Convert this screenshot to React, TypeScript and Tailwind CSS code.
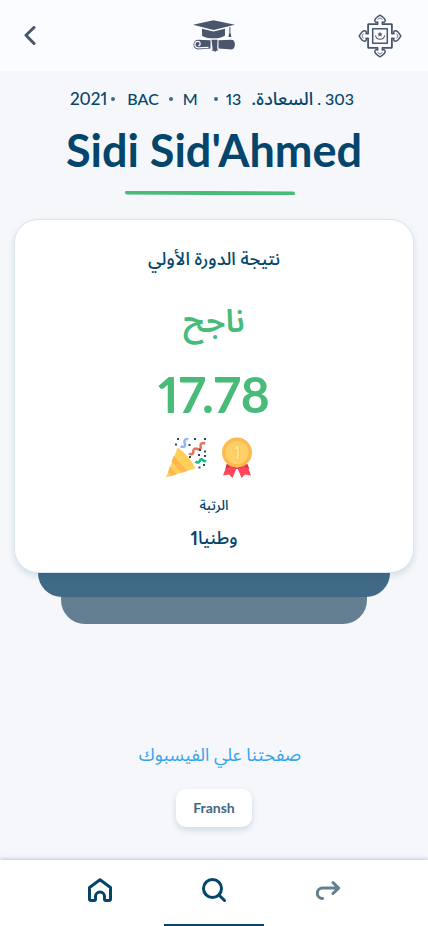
import React from "react";

const arabic = "font-['Noto_Sans_Arabic','DejaVu_Sans',sans-serif]";

function ChevronLeft() {
  return (
    <svg className="h-5 w-3" viewBox="0 0 12 20" fill="none" stroke="#4a566b" strokeWidth="3" strokeLinecap="round" strokeLinejoin="round" aria-hidden="true">
      <path d="M10 1.500 2 9.300 10 17.500" />
    </svg>
  );
}

function Graduation() {
  return (
    <svg className="h-8 w-[42px]" viewBox="0 0 42 32" aria-hidden="true">
      <g fill="#4a566b">
        <path d="M0 4.800 20.500.300 42 4.800 20.500 10Z" />
        <path d="M9 8.800 20.500 11.500 32 8.800V15.500c-2.500 2-7 2.800-11.500 2.800S11 17.500 9 15.500Z" />
        <path d="M36.400 7h1v6.500h-1zM36 13.500h1.800l.5 3.500h-2.800z" />
        <path d="M4.500 19.700 17.500 20.300v8.300l-13 .8C-.8 29-.8 20.100 4.500 19.700Z" />
        <path d="M25.500 20.300 39 19.700c3.800.4 3.800 8.900 0 9.700l-13.500-.8Z" />
        <path d="M18.500 19.800h6l-.3 8.800 1 1.900-2 .2-1 1.200-1.200-1.200-1.800.3.400-2Z" />
      </g>
      <path d="M15.500 27.300 5 27.900c-4.200-.5-4-6.500-.2-6.500 3 0 3.100 4 .5 4.300" fill="none" stroke="#fbfcff" strokeWidth="1.200" />
    </svg>
  );
}

function Emblem() {
  return (
    <svg className="h-11 w-11" viewBox="0 0 44 44" fill="none" stroke="#4a566b" strokeWidth="1.500" strokeLinejoin="round" aria-hidden="true">
      {[0, 90, 180, 270].map((angle) => (
        <g key={angle} transform={`rotate(${angle} 22 22)`}>
          <path d="M10.200 19.700V10.200h9.500V8c-1.500.8-3 0-2.900-1.600.2-2.300 2.700-3.600 5.200-5.200 2.500 1.600 5 2.900 5.200 5.200.1 1.600-1.400 2.400-2.900 1.600v2.200h9.500v9.500" />
          <path d="M19.500 5.500 22 4l2.500 1.500" strokeWidth=".8" />
        </g>
      ))}
      <rect x="14.700" y="14.700" width="14.600" height="14.600" />
      <path d="M17.500 21.500a4.700 4.700 0 0 0 9.200 0" strokeWidth="1.200" />
      <path d="m22 17.500.8 1.900h1.900l-1.400 1.300.6 2-1.900-1.200-1.900 1.200.6-2-1.400-1.300h1.900Z" fill="#4a566b" stroke="none" />
    </svg>
  );
}

function PartyPopper() {
  return (
    <svg className="h-[41px] w-[41px]" viewBox="0 0 41 41" role="img" aria-label="تهانينا">
      <path d="M11.500 11 29 31.500 0 40.500Z" fill="#ffd05c" />
      <path d="m7.800 18.500 13.500 15.400-6 1.900-9.700-11.200ZM3.800 29.500l7 7.800-5.500 1.600-3.100-3.900Z" fill="#ffb84e" />
      <path d="M11.500 11C16 12 29 27 28.700 31.500c-4 .7-18-16-17.200-20.500Z" fill="#ffcf55" />
      <path d="M14.500 9.500c3.500 1 5.500-.2 4.300-3.200C17.500 3 20 1 22 2.500" fill="none" stroke="#8db7fa" strokeWidth="2.500" />
      <path d="M23 16.500c2.500 1.500 4.500.5 4.300-2-.2-2.500 2-3.500 4.300-2.500 2.500 1 3.600-1 3-3-.5-2.300 1.800-3.700 4.600-2.500" fill="none" stroke="#e3735b" strokeWidth="2.500" />
      <path d="M29.500 24.500c2 1.700 3.800 1.200 4.300-.8.600-2.200 2.700-1.500 3.400-.3.700 1.200 1.800 1 2.300-.4" fill="none" stroke="#0dbd82" strokeWidth="2.500" />
      <path d="M11 1h2v2h-2zM9 6.500h2v2H9zM22.500 7h2v2h-2zM28 1h2v2h-2zM38 1h2v2h-2zM33 12h2v2h-2zM38 13.500h2v2h-2zM23 19h2v2h-2zM32 17h2v2h-2zM38 18h2v2h-2zM32.500 29.500h2v2h-2zM37 27h2v2h-2z" fill="#294b69" />
    </svg>
  );
}

function Medal() {
  return (
    <svg className="h-[41px] w-8" viewBox="0 0 32 41" role="img" aria-label="المركز الأول">
      <path d="M7 25 2 38.500l6-1 3.500 3.500L16 30l4.500 11 3.500-3.500 6 1L25 25Z" fill="#ff465a" />
      <path d="m5.500 27 3.500 3 7 1 7-1 3.500-3 2 5-5-2-7 2-7-2-5 2Z" fill="#d93547" />
      <circle cx="16" cy="15.500" r="15" fill="#fdbb4e" />
      <circle cx="16" cy="15.500" r="11.500" fill="#ffcf68" />
      <path d="M5.500 20a11.500 11.500 0 0 0 21 0A11.500 11.500 0 0 1 5.500 20Z" fill="#ffb950" />
      <path d="m12 11.500 4.300-3.500h2.200v15h-3.300V12.300l-2.200 1.500Z" fill="#ffe383" stroke="#fbb64c" strokeWidth=".6" />
    </svg>
  );
}

function Dot() {
  return <span className="h-1 w-1 rounded-full bg-[#3f6883]" />;
}

const tab = "flex h-full w-[100px] items-center justify-center border-b-2 pb-1";

export default function App() {
  return (
    <div className="flex min-h-screen flex-col bg-[#f5f7fb] font-['Lato',sans-serif] text-[#03456b]">
      <header className="grid h-[71px] grid-cols-[1fr_auto_1fr] items-center bg-[#fbfcff] px-6">
        <button type="button" aria-label="رجوع" className="justify-self-start">
          <ChevronLeft />
        </button>
        <Graduation />
        <div className="justify-self-end pr-[2px]">
          <Emblem />
        </div>
      </header>

      <main className="flex flex-1 flex-col">
        <div className="mt-[14px] flex h-7 items-center justify-center text-base font-medium proportional-nums">
          <div className="flex items-center gap-1">
            <span className="text-[17px]">2021</span>
            <Dot />
          </div>
          <div className="flex items-center gap-[10px] pl-3">
            <span>BAC</span>
            <Dot />
            <span>M</span>
          </div>
          <div className="flex items-center gap-2 pl-4">
            <Dot />
            <span>13</span>
          </div>
          <span dir="rtl" className={`pl-[10px] text-lg ${arabic}`}>السعادة.</span>
          <span className="pl-1 pr-1">. 303</span>
        </div>

        <h1 className="mt-1 text-center text-[45px] font-bold leading-[66px]">Sidi Sid'Ahmed</h1>
        <div className="mt-2 flex justify-center pr-2">
          <svg className="h-1 w-[170px]" viewBox="0 0 170 4" aria-hidden="true">
            <path d="M2 1.600 168 2.400" stroke="#48bb78" strokeWidth="4" strokeLinecap="round" />
          </svg>
        </div>

        <section className="mt-6 flex flex-col">
          <div className="relative z-10 mx-[14px] flex h-[354px] flex-col items-center rounded-3xl border border-[#dce6ef] bg-white pt-[25px] shadow-[0_3px_6px_rgba(3,69,107,0.14)]">
            <h2 dir="rtl" className={`text-lg font-medium leading-7 ${arabic}`}>نتيجة الدورة الأولي</h2>
            <p dir="rtl" className={`mt-6 text-[32px] font-semibold leading-[50px] text-[#48bb78] ${arabic}`}>ناجح</p>
            <p className="mt-4 text-[50px] font-bold proportional-nums leading-[62px] text-[#48bb78]">17.78</p>
            <div className="mt-3 flex gap-[14px] pr-[10px]">
              <PartyPopper />
              <Medal />
            </div>
            <p dir="rtl" className={`mt-4 text-sm font-medium leading-6 ${arabic}`}>الرتبة</p>
            <p className={`mt-2 flex text-lg font-medium leading-6 ${arabic}`}>
              <span className="font-['Lato',sans-serif] font-bold proportional-nums">1</span>
              <span dir="rtl">وطنيا</span>
            </p>
          </div>
          <div className="mx-[38px] h-6 rounded-b-3xl bg-[#406a85]" />
          <div className="mx-[61px] h-[27px] rounded-b-3xl bg-[#637f91]" />
        </section>

        <footer className="mt-auto flex flex-col items-center pb-[33px] pt-8">
          <a href="#facebook" dir="rtl" className={`pl-3 text-lg leading-7 text-[#34a4ee] ${arabic}`}>صفحتنا علي الفيسبوك</a>
          <button type="button" className="mt-5 h-[38px] w-[76px] rounded-[10px] bg-white text-sm font-bold text-[#3f6883] shadow-[0_3px_6px_rgba(3,69,107,0.16)]">Fransh</button>
        </footer>
      </main>

      <nav className="flex h-[66px] justify-center gap-[14px] bg-white shadow-[0_-1px_4px_rgba(3,69,107,0.25)]">
        <a href="#home" aria-label="الرئيسية" className={`${tab} border-transparent`}>
          <svg className="h-6 w-6" viewBox="0 0 24 24" fill="none" stroke="#03456b" strokeWidth="3" strokeLinejoin="round" aria-hidden="true">
            <path d="M1.500 9.500 12 1.700l10.500 7.800V21a1.500 1.500 0 0 1-1.500 1.500h-3a1.500 1.500 0 0 1-1.500-1.500v-2.500a4.500 4.500 0 0 0-9 0V21A1.500 1.500 0 0 1 6 22.500H3A1.500 1.500 0 0 1 1.500 21Z" />
          </svg>
        </a>
        <a href="#search" aria-label="بحث" aria-current="page" className={`${tab} border-[#03456b]`}>
          <svg className="h-6 w-6" viewBox="0 0 24 24" fill="none" stroke="#03456b" strokeWidth="3" strokeLinecap="round" aria-hidden="true">
            <circle cx="10.500" cy="10.500" r="9" />
            <path d="m17.500 17.500 5 5" />
          </svg>
        </a>
        <a href="#share" aria-label="مشاركة" className={`${tab} border-transparent`}>
          <svg className="h-6 w-6" viewBox="0 0 24 24" fill="none" stroke="#637f91" strokeWidth="3" strokeLinecap="round" strokeLinejoin="round" aria-hidden="true">
            <path d="M6.500 20.500a5.200 5.200 0 0 1 0-10.400H22.500M17 4.500l5.600 5.600L17 15.500" />
          </svg>
        </a>
      </nav>
    </div>
  );
}
